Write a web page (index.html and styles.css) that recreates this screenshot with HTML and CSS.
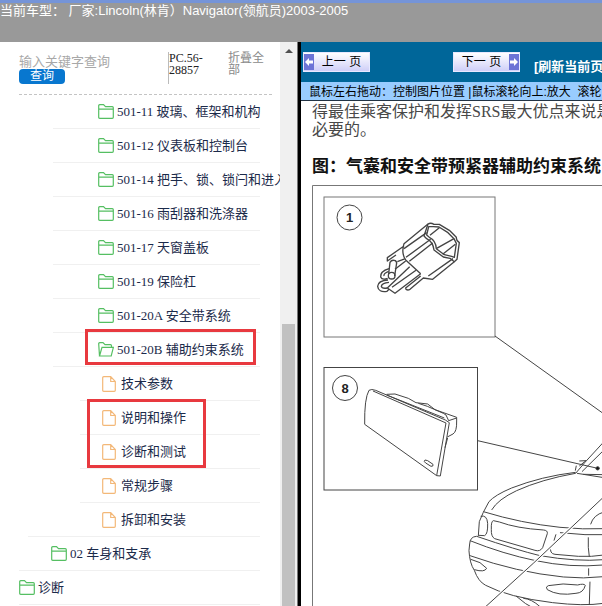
FILE: index.html
```
<!DOCTYPE html>
<html lang="zh-CN">
<head>
    <meta charset="UTF-8">
    <meta name="viewport" content="width=device-width, initial-scale=1.0">
    <title>Lincoln Navigator 2003-2005</title>
    <link rel="stylesheet" href="styles.css">
</head>
<body>
    <svg class="symbols" aria-hidden="true">
        <symbol id="folder" viewBox="0 0 16 15">
            <path d="M.7 13.3V1.7Q.7.7 1.7.7H5.5L7.5 2.7H14.3Q15.3 2.7 15.3 3.7V13.3Q15.3 14.3 14.3 14.3H1.7Q.7 14.3.7 13.3ZM.7 5.2H15.3"/>
        </symbol>
        <symbol id="folder-open" viewBox="0 0 16 15">
            <path d="M1.5 14L.7 1.7Q.7.7 1.7.7H5L7 2.7H12.5Q13.5 2.7 13.5 3.7V5M1.5 14L4 5.3H15.4L13.2 14Z"/>
        </symbol>
        <symbol id="file" viewBox="0 0 14 16">
            <path d="M1.7.7H8.7L13.3 5.5V14.3Q13.3 15.3 12.3 15.3H1.7Q.7 15.3.7 14.3V1.7Q.7.7 1.7.7ZM8.7.7V5.5H13.3"/>
        </symbol>
    </svg>

    <header class="header">当前车型： 厂家:Lincoln(林肯）Navigator(领航员)2003-2005</header>

    <div class="layout">
        <aside class="sidebar">
            <div class="panel">
                <form class="search">
                    <div class="search-field">
                        <input type="text" class="search-input" placeholder="输入关键字查询" aria-label="输入关键字查询">
                        <button type="button" class="search-button">查询</button>
                    </div>
                    <div class="search-code">PC.56-28857</div>
                    <a href="#" class="collapse">折叠全部</a>
                </form>

                <ul class="tree">
                    <li class="node level-2"><svg class="folder"><use href="#folder"/></svg><a href="#">501-11 玻璃、框架和机构</a></li>
                    <li class="node level-2"><svg class="folder"><use href="#folder"/></svg><a href="#">501-12 仪表板和控制台</a></li>
                    <li class="node level-2"><svg class="folder"><use href="#folder"/></svg><a href="#">501-14 把手、锁、锁闩和进入</a></li>
                    <li class="node level-2"><svg class="folder"><use href="#folder"/></svg><a href="#">501-16 雨刮器和洗涤器</a></li>
                    <li class="node level-2"><svg class="folder"><use href="#folder"/></svg><a href="#">501-17 天窗盖板</a></li>
                    <li class="node level-2"><svg class="folder"><use href="#folder"/></svg><a href="#">501-19 保险杠</a></li>
                    <li class="node level-2"><svg class="folder"><use href="#folder"/></svg><a href="#">501-20A 安全带系统</a></li>
                    <li class="node level-2"><svg class="folder"><use href="#folder-open"/></svg><a href="#">501-20B 辅助约束系统</a><span class="mark mark-folder"></span></li>
                    <li class="node level-3"><svg class="file"><use href="#file"/></svg><a href="#">技术参数</a></li>
                    <li class="node level-3"><svg class="file"><use href="#file"/></svg><a href="#">说明和操作</a><span class="mark mark-files"></span></li>
                    <li class="node level-3"><svg class="file"><use href="#file"/></svg><a href="#">诊断和测试</a></li>
                    <li class="node level-3"><svg class="file"><use href="#file"/></svg><a href="#">常规步骤</a></li>
                    <li class="node level-3 last"><svg class="file"><use href="#file"/></svg><a href="#">拆卸和安装</a></li>
                    <li class="node level-1"><svg class="folder"><use href="#folder"/></svg><a href="#">02 车身和支承</a></li>
                    <li class="node level-0"><svg class="folder"><use href="#folder"/></svg><a href="#">诊断</a></li>
                </ul>
            </div>
            <div class="scrollbar">
                <span class="scroll-arrow"></span>
                <span class="scroll-thumb"></span>
            </div>
        </aside>

        <main class="viewer">
            <div class="toolbar">
                <button type="button" class="page-button prev">
                    <svg class="arrow" viewBox="0 0 10 16"><path d="M1 8L5 4V6.5H9V9.5H5V12Z"/></svg>
                    <span>上一 页</span>
                </button>
                <button type="button" class="page-button next">
                    <span>下一 页</span>
                    <svg class="arrow" viewBox="0 0 10 16"><path d="M9 8L5 4V6.5H1V9.5H5V12Z"/></svg>
                </button>
                <a href="#" class="refresh">[刷新当前页</a>
            </div>
            <div class="hint">鼠标左右拖动：控制图片位置 |鼠标滚轮向上:放大 &nbsp;滚轮</div>

            <article class="document">
                <p>得最佳乘客保护和发挥SRS最大优点来说是<br>必要的。</p>
                <h2>图：气囊和安全带预紧器辅助约束系统</h2>
                <svg class="figure" width="600" height="600" viewBox="312 185 600 600" role="img" aria-label="气囊和安全带预紧器辅助约束系统">
                    <path class="frame" d="M912 185.500H312.500V785"/>
                    <rect class="frame" x="324" y="197" width="171" height="140"/>
                    <rect class="frame dark" x="324" y="367.500" width="153.500" height="122.500"/>
                    <circle cx="349.500" cy="217.500" r="12.500"/>
                    <circle cx="345" cy="388" r="12.500"/>
                    <text x="349.500" y="222">1</text>
                    <text x="345" y="393">8</text>

                    <!-- connector -->
                    <g class="connector" transform="translate(360 210) scale(.3333)">
                        <path d="M204 42L132 101Q123 130 137 150L182 191M132 108L82 143V153L108 135M132 116L200 68M138 142L212 88M148 154L218 99"/>
                        <path d="M204 42Q212 37 222 43L238 43L268 61L289 82Q288 91 298 98L291 148L283 155L270 145L250 141L222 120Q219 95 200 86L192 78Z"/>
                        <path d="M206 50L220 50L237 51L264 68L282 86L289 100L283 142L275 139L253 134L229 116Q228 92 208 82L200 75Z"/>
                        <path d="M210 76L238 53M248 133L286 103M230 115L282 86M283 155L218 208L190 204L150 238Q141 243 136 235M279 146L205 198"/>
                        <path d="M182 191L105 250L82 234L149 170M96 232L168 181M136 235L182 198M112 155L134 147M105 178L137 153"/>
                        <path d="M86 192L90 157Q95 148 106 152Q112 156 109 165L104 198"/>
                        <circle cx="95" cy="197" r="10"/>
                        <path d="M87 176Q60 184 62 201Q66 211 83 205M86 184Q70 190 72 198M84 210Q54 212 53 229Q55 248 81 244L87 238M87 217Q65 219 64 229Q66 237 82 234"/>
                    </g>

                    <g transform="translate(300 350) scale(.3333)">
                        <path d="M585 -42L912 192M533 272L893 355"/>
                        <circle class="dot" cx="893" cy="355" r="5"/>

                        <!-- passenger air bag -->
                        <path d="M207 121Q193 145 194 223L410 377L421 378L448 218L436 210L227 121Q214 116 207 121ZM410 377L438 219L219 123M260 133L285 132L325 145L348 158L383 162L405 179L470 202V213Q471 245 459 252L442 261M355 160L382 169L430 190L438 195L446 212L470 204M443 264L435 293M260 135L433 204"/>
                        <path d="M375 330Q370 335 377 339L393 349Q401 350 399 343L383 332Z"/>

                        <!-- hood and windshield -->
                        <path d="M535 558L538 515L550 487L567 455Q585 435 635 414Q725 379 827 367M575 480Q594 448 650 422Q725 388 827 370M912 275L855 337L827 370M912 300L846 365M838 333L858 332L838 348M826 362L829 347M912 383L831 370M850 373L912 374"/>
                        <path d="M550 485Q665 520 780 532Q850 539 912 536M872 523Q880 495 912 486"/>

                        <!-- grille and lamps -->
                        <path d="M542 499Q561 494 563 520Q564 552 554 557L536 556M580 512Q573 514 574 538Q573 560 584 566L705 601Q720 606 728 593L742 551Q744 541 730 540Q650 535 598 516Z"/>
                        <path d="M768 553L762 572M780 548L855 554H912M752 587Q748 612 765 613L835 619Q875 621 912 615M865 562V592L868 620"/>
                        <path d="M912 629Q830 636 720 617Q650 600 530 559Q510 560 509 582L507 602Q509 640 523 661Q535 695 557 706Q625 742 758 758Q850 769 912 760"/>
                        <path d="M510 572Q610 612 707 632Q810 654 912 645M510 617Q650 667 790 681Q850 687 912 680M512 628L540 638L560 655Q554 668 523 659"/>
                        <path d="M745 707Q735 710 742 719Q775 739 828 730Q850 729 856 706Q852 700 833 705Q790 698 745 707ZM866 655V677M870 695L868 765M648 738Q675 763 710 780M670 745Q695 747 720 770"/>

                        <path class="leader-gap" d="M557 770L700 640L912 440"/>
                        <path d="M557 770L700 640L912 440"/>
                    </g>
                </svg>
            </article>
        </main>
    </div>
</body>
</html>
```

FILE: styles.css
```
:root {
    --header-bg: #999999;
    --toolbar-bg: #006699;
    --hint-bg: #99ccff;
    --link-color: #1b2a4a;
    --folder-color: #55bf62;
    --file-color: #f3b878;
    --mark-color: #e8393f;
    --sans: "Liberation Sans", "Noto Sans CJK SC", sans-serif;
    --serif: "Liberation Serif", "Noto Sans CJK SC", serif;
}

* {
    box-sizing: border-box;
    margin: 0;
    padding: 0;
}

body {
    height: 100vh;
    display: flex;
    flex-direction: column;
    overflow: hidden;
    background-color: #ffffff;
    font-family: var(--sans);
    font-size: 13px;
}

a {
    color: inherit;
    text-decoration: none;
}

.symbols {
    position: absolute;
    width: 0;
    height: 0;
}

.header {
    flex: none;
    height: 42px;
    border-top: 3px solid #7594d8;
    background-color: var(--header-bg);
    color: #ffffff;
    line-height: 16px;
    white-space: nowrap;
}

.layout {
    flex: 1;
    min-height: 0;
    display: grid;
    grid-template-columns: 50% 50%;
}

/* Sidebar */
.sidebar {
    display: flex;
    min-width: 0;
    min-height: 0;
    border-right: 3px solid #000000;
}

.panel {
    flex: 1;
    min-width: 0;
    overflow: hidden;
    font-family: var(--serif);
}

.search {
    display: flex;
    height: 53px;
    margin: 0 8px 0 19px;
    padding-top: 10px;
    border-bottom: 1px dashed #c4c4c4;
    line-height: 12px;
}

.search-field {
    width: 149px;
    padding-top: 2px;
}

.search-input {
    display: block;
    width: 100%;
    height: 15px;
    border: none;
    outline: none;
    font-family: var(--sans);
    font-size: 13px;
}

.search-input::placeholder {
    color: #a8a8a8;
}

.search-button {
    display: block;
    width: 46px;
    height: 15px;
    border: none;
    border-radius: 4px;
    background-color: #0877cf;
    color: #ffffff;
    font-family: var(--sans);
    font-size: 12px;
    line-height: 15px;
    cursor: pointer;
}

.search-code {
    width: 60px;
    height: 32px;
    padding-right: 16px;
    border-left: 1px solid #bbbbbb;
    color: #222222;
    font-size: 12px;
}

.collapse {
    width: 38px;
    color: #8a8a8a;
    font-size: 12px;
}

.tree {
    list-style: none;
    margin: 0 20px 0 19px;
}

.node {
    position: relative;
    display: flex;
    align-items: center;
    height: 34px;
    border-bottom: 1px solid #f0f0f0;
    color: var(--link-color);
    line-height: 20px;
    white-space: nowrap;
}

.node svg {
    flex: none;
    fill: none;
    stroke-width: 1.2;
}

.folder {
    width: 16px;
    height: 15px;
    margin-right: 3px;
    stroke: var(--folder-color);
}

.file {
    width: 14px;
    height: 16px;
    margin-right: 5px;
    stroke: var(--file-color);
}

.level-1 {
    padding-left: 32px;
}

.level-2 {
    margin-left: 34px;
    padding-left: 45px;
}

.level-3 {
    margin-left: 61px;
    padding-left: 22px;
}

.level-3.last {
    margin-left: 9px;
    padding-left: 74px;
}

.mark {
    position: absolute;
    border: 3px solid var(--mark-color);
}

.mark-folder {
    left: 32px;
    top: -4px;
    width: 171px;
    height: 36px;
}

.mark-files {
    left: 7px;
    top: -2px;
    width: 119px;
    height: 69px;
}

.scrollbar {
    flex: none;
    width: 18px;
    display: flex;
    flex-direction: column;
    align-items: center;
    border-right: 1px solid #777777;
    background-color: #f0f0f0;
}

.scroll-arrow {
    margin-top: 7px;
    border: 4px solid transparent;
    border-top: none;
    border-bottom-color: #505050;
}

.scroll-thumb {
    width: 13px;
    height: 50%;
    margin-top: auto;
    background-color: #c1c1c1;
}

/* Viewer */
.viewer {
    min-width: 0;
    overflow: hidden;
}

.toolbar {
    display: flex;
    align-items: center;
    height: 40px;
    padding-left: 2px;
    background-color: var(--toolbar-bg);
}

.page-button {
    flex: none;
    display: flex;
    align-items: center;
    width: 67px;
    height: 20px;
    border: 1px solid #e8e8ff;
    background: linear-gradient(#ffffff, #cfcff8);
    color: #000000;
    font-family: var(--sans);
    font-size: 12px;
    line-height: 18px;
    cursor: pointer;
}

.page-button span {
    flex: 1;
}

.prev {
    margin-right: 83px;
}

.next {
    margin-right: 14px;
}

.arrow {
    flex: none;
    width: 10px;
    height: 16px;
    background-color: #6d74d6;
    fill: #ffffff;
}

.refresh {
    flex: none;
    padding-top: 10px;
    color: #ffffff;
    font-weight: bold;
    line-height: 20px;
}

.hint {
    height: 19px;
    padding-left: 8px;
    border-bottom: 1px solid #223344;
    background-color: var(--hint-bg);
    color: #000000;
    font-size: 12px;
    line-height: 20px;
    white-space: nowrap;
}

.document {
    padding: 2px 0 0 11px;
    white-space: nowrap;
}

.document p {
    color: #484848;
    font-family: var(--serif);
    font-size: 16px;
    line-height: 18px;
}

.document h2 {
    margin: 16px 0 7px;
    color: #111111;
    font-size: 17px;
    line-height: 23px;
}

.figure {
    display: block;
    fill: none;
    stroke: #444444;
    stroke-width: 1;
}

.figure g {
    stroke-width: 3;
    stroke-linejoin: round;
}

.figure .connector {
    stroke-width: 4;
}

.figure .frame {
    stroke: #777777;
}

.figure .dark {
    stroke: #444444;
}

.figure text {
    fill: #222222;
    stroke: none;
    font-size: 13px;
    font-weight: bold;
    text-anchor: middle;
}

.figure .dot {
    fill: #111111;
}

.figure .leader-gap {
    stroke: #ffffff;
    stroke-width: 10;
}
```
